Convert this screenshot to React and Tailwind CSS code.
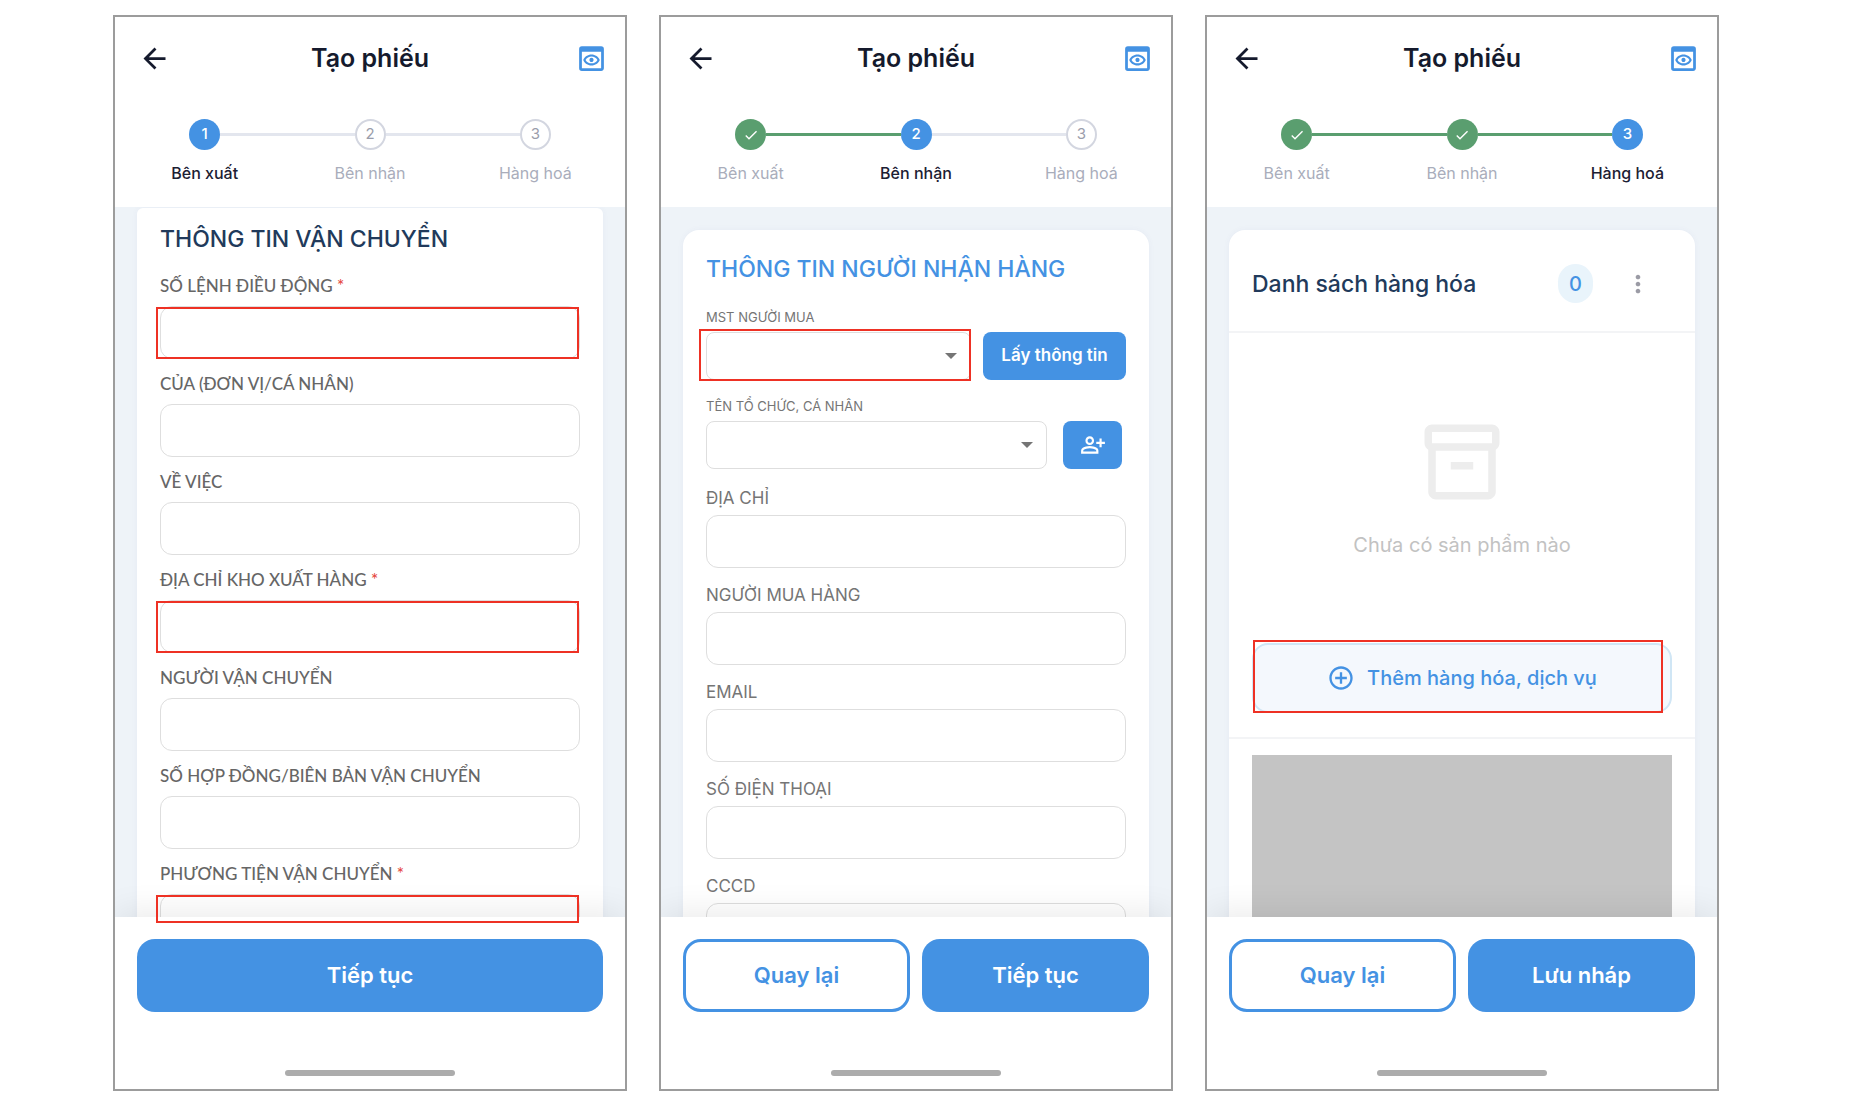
import clsx from 'clsx'
import {
  MdAddCircleOutline,
  MdArrowBack,
  MdCheck,
  MdMoreVert,
  MdOutlineInventory2,
  MdOutlinePersonAddAlt,
  MdOutlinePreview,
} from 'react-icons/md'

const STEPS = ['Bên xuất', 'Bên nhận', 'Hàng hoá']

const TRANSPORT_FIELDS = [
  { id: 'so-lenh', label: 'SỐ LỆNH ĐIỀU ĐỘNG', required: true, marked: true },
  { id: 'cua', label: 'CỦA (ĐƠN VỊ/CÁ NHÂN)' },
  { id: 've-viec', label: 'VỀ VIỆC' },
  { id: 'kho-xuat', label: 'ĐỊA CHỈ KHO XUẤT HÀNG', required: true, marked: true },
  { id: 'nguoi-van-chuyen', label: 'NGƯỜI VẬN CHUYỂN' },
  { id: 'so-hop-dong', label: 'SỐ HỢP ĐỒNG/BIÊN BẢN VẬN CHUYỂN' },
  { id: 'phuong-tien', label: 'PHƯƠNG TIỆN VẬN CHUYỂN', required: true },
]

const RECEIVER_FIELDS = [
  { id: 'dia-chi', label: 'ĐỊA CHỈ' },
  { id: 'nguoi-mua', label: 'NGƯỜI MUA HÀNG' },
  { id: 'email', label: 'EMAIL' },
  { id: 'dien-thoai', label: 'SỐ ĐIỆN THOẠI' },
  { id: 'cccd', label: 'CCCD' },
]

function Mark({ className }) {
  return <span className={clsx('pointer-events-none absolute border-2 border-[#ee3124]', className)} />
}

function Stepper({ current }) {
  return (
    <ol className="grid grid-cols-3 px-[7px] pt-5 pb-[22px]">
      {STEPS.map((name, i) => {
        const step = i + 1
        const done = step < current
        const active = step === current
        return (
          <li key={name} className="flex flex-col items-center gap-[11px]">
            <div className="flex w-full items-center">
              <span className={clsx('h-[3px] flex-1', i > 0 && (step <= current ? 'bg-[#5a9e6f]' : 'bg-[#e3e6ee]'))} />
              <span
                className={clsx(
                  'flex size-[31px] items-center justify-center rounded-full text-[15px]',
                  done && 'bg-[#5a9e6f] text-white',
                  active && 'bg-[#4492e3] font-medium text-white',
                  !done && !active && 'border-2 border-[#d3d6e0] text-[#9a9dab]'
                )}
              >
                {done ? <MdCheck className="size-4" /> : step}
              </span>
              <span className={clsx('h-[3px] flex-1', i < 2 && (done ? 'bg-[#5a9e6f]' : 'bg-[#e3e6ee]'))} />
            </div>
            <span className={clsx('text-base', active ? 'font-medium text-[#1c2033]' : 'text-[#a9adbb]')}>{name}</span>
          </li>
        )
      })}
    </ol>
  )
}

function Phone({ step, footer, children }) {
  return (
    <section className="flex min-h-0 flex-col overflow-hidden border-2 border-[#9c9c9c] bg-white">
      <header>
        <div className="grid h-[82px] grid-cols-[1fr_auto_1fr] items-center px-[17px]">
          <button type="button" aria-label="Quay lại" className="ml-1.5 justify-self-start text-[#151a2d]">
            <MdArrowBack className="size-[33px]" />
          </button>
          <h1 className="text-[25px] leading-8 font-semibold text-[#151a2d]">Tạo phiếu</h1>
          <button type="button" aria-label="Xem trước" className="justify-self-end text-[#4492e3]">
            <MdOutlinePreview className="size-[33px]" />
          </button>
        </div>
        <Stepper current={step} />
      </header>
      <div className="min-h-0 flex-1 overflow-hidden bg-[#eef3f8] px-[22px]">{children}</div>
      <footer className="relative px-[22px] pt-[22px] pb-[13px] shadow-[0_-6px_30px_rgba(0,0,0,0.08)]">
        {footer}
        <div className="mx-auto mt-[58px] h-1.5 w-[170px] rounded-full bg-[#acacac]" />
      </footer>
    </section>
  )
}

function ActionButton({ outline, children }) {
  return (
    <button
      type="button"
      className={clsx(
        'h-[73px] w-full rounded-[18px] text-[22px] font-semibold',
        outline ? 'border-3 border-[#4492e3] bg-white text-[#4492e3]' : 'bg-[#4492e3] text-white'
      )}
    >
      {children}
    </button>
  )
}

function Field({ field, className, labelClass }) {
  return (
    <div className={clsx('flex flex-col', className)}>
      <label htmlFor={field.id} className={labelClass}>
        {field.label}
        {field.required && <span className="text-[#e5483d]"> *</span>}
      </label>
      <div className="relative">
        <input id={field.id} type="text" className="block h-[53px] w-full rounded-xl border border-[#dedede] bg-transparent px-4" />
        {field.marked && <Mark className="top-px right-px -left-1 h-[52px]" />}
      </div>
    </div>
  )
}

function SelectBox({ id, children }) {
  return (
    <div className="relative flex-1">
      <select id={id} className="block h-12 w-full appearance-none rounded-lg border border-[#dedede] bg-white px-4" />
      <svg viewBox="0 0 12 6" className="pointer-events-none absolute top-[21px] right-3.5 h-1.5 w-3 fill-[#757575]">
        <path d="M0 0h12L6 6z" />
      </svg>
      {children}
    </div>
  )
}

function SenderStep() {
  return (
    <Phone
      step={1}
      footer={
        <>
          <ActionButton>Tiếp tục</ActionButton>
          <Mark className="-top-[22px] right-[46px] left-[41px] h-7" />
        </>
      }
    >
      <div className="mt-px rounded-t-md bg-white px-[23px] pt-[15px] shadow-[0_0_6px_rgba(80,80,160,0.05)]">
        <h2 className="text-[23px] leading-8 font-medium text-[#213a5b]">THÔNG TIN VẬN CHUYỂN</h2>
        <div className="mt-[21px] flex flex-col gap-[15px]">
          {TRANSPORT_FIELDS.map(f => (
            <Field
              key={f.id}
              field={f}
              className="gap-2.5"
              labelClass="font-[Lato,sans-serif] text-[17px] leading-5 font-medium text-[#666666]"
            />
          ))}
        </div>
      </div>
    </Phone>
  )
}

function ReceiverStep() {
  return (
    <Phone
      step={2}
      footer={
        <div className="grid grid-cols-2 gap-3">
          <ActionButton outline>Quay lại</ActionButton>
          <ActionButton>Tiếp tục</ActionButton>
        </div>
      }
    >
      <div className="mt-[23px] rounded-t-2xl bg-white px-[23px] pt-[23px] shadow-[0_0_6px_rgba(80,80,160,0.05)]">
        <h2 className="text-[23px] leading-8 font-medium text-[#4492e3]">THÔNG TIN NGƯỜI NHẬN HÀNG</h2>
        <label htmlFor="mst" className="mt-[22px] block text-[13px] leading-5 text-[#757575]">MST NGƯỜI MUA</label>
        <div className="mt-[5px] flex gap-3">
          <SelectBox id="mst">
            <Mark className="-top-[3px] right-0 -left-[7px] h-[52px]" />
          </SelectBox>
          <button type="button" className="h-12 w-[143px] rounded-lg bg-[#4492e3] text-[17px] font-semibold text-white">
            Lấy thông tin
          </button>
        </div>
        <label htmlFor="ten" className="mt-4 block text-[13px] leading-5 text-[#757575]">TÊN TỔ CHỨC, CÁ NHÂN</label>
        <div className="mt-[5px] flex gap-4 pr-1">
          <SelectBox id="ten" />
          <button
            type="button"
            aria-label="Thêm người mua"
            className="flex h-12 w-[59px] items-center justify-center rounded-lg bg-[#4492e3] text-white"
          >
            <MdOutlinePersonAddAlt className="size-[26px]" />
          </button>
        </div>
        <div className="mt-[19px] flex flex-col gap-[17px]">
          {RECEIVER_FIELDS.map(f => (
            <Field key={f.id} field={f} className="gap-[7px]" labelClass="text-[17px] leading-5 text-[#757575]" />
          ))}
        </div>
      </div>
    </Phone>
  )
}

function GoodsStep() {
  return (
    <Phone
      step={3}
      footer={
        <div className="grid grid-cols-2 gap-3">
          <ActionButton outline>Quay lại</ActionButton>
          <ActionButton>Lưu nháp</ActionButton>
        </div>
      }
    >
      <div className="mt-[23px] rounded-t-2xl bg-white shadow-[0_0_6px_rgba(80,80,160,0.05)]">
        <div className="flex h-[103px] items-center border-b-2 border-[#f3f4f6] pt-1.5 pr-[43px] pl-[23px]">
          <h2 className="flex-1 text-[23px] leading-8 font-medium text-[#213a5b]">Danh sách hàng hóa</h2>
          <span className="flex h-[39px] w-[35px] items-center justify-center rounded-full bg-[#e9f4fb] text-xl font-medium text-[#4492e3]">
            0
          </span>
          <button type="button" aria-label="Tuỳ chọn" className="ml-[31px] text-[#9b9ba5]">
            <MdMoreVert className="size-7" />
          </button>
        </div>
        <div className="flex flex-col items-center px-[23px] pt-[84px] pb-6">
          <MdOutlineInventory2 className="size-[90px] text-[#ededed]" />
          <p className="mt-6 text-xl text-[#c2c2c2]">Chưa có sản phẩm nào</p>
          <div className="relative mt-[84px] w-full">
            <button
              type="button"
              className="flex h-[70px] w-full items-center justify-center gap-3 rounded-2xl border-2 border-[#d0e6f5] bg-[#f4f8fd] text-xl font-medium text-[#4492e3]"
            >
              <MdAddCircleOutline className="size-7" />
              Thêm hàng hóa, dịch vụ
            </button>
            <Mark className="-top-[3px] right-[9px] left-px h-[73px]" />
          </div>
        </div>
        <div className="border-t-2 border-[#f3f4f6] px-[23px] pt-4">
          <div className="h-[200px] bg-[#c4c4c4]" />
        </div>
      </div>
    </Phone>
  )
}

export default function App() {
  return (
    <main className="grid h-screen grid-cols-3 grid-rows-1 gap-8 bg-white pt-[15px] pr-[137px] pb-[15px] pl-[113px] font-[Inter,Roboto,sans-serif]">
      <SenderStep />
      <ReceiverStep />
      <GoodsStep />
    </main>
  )
}
